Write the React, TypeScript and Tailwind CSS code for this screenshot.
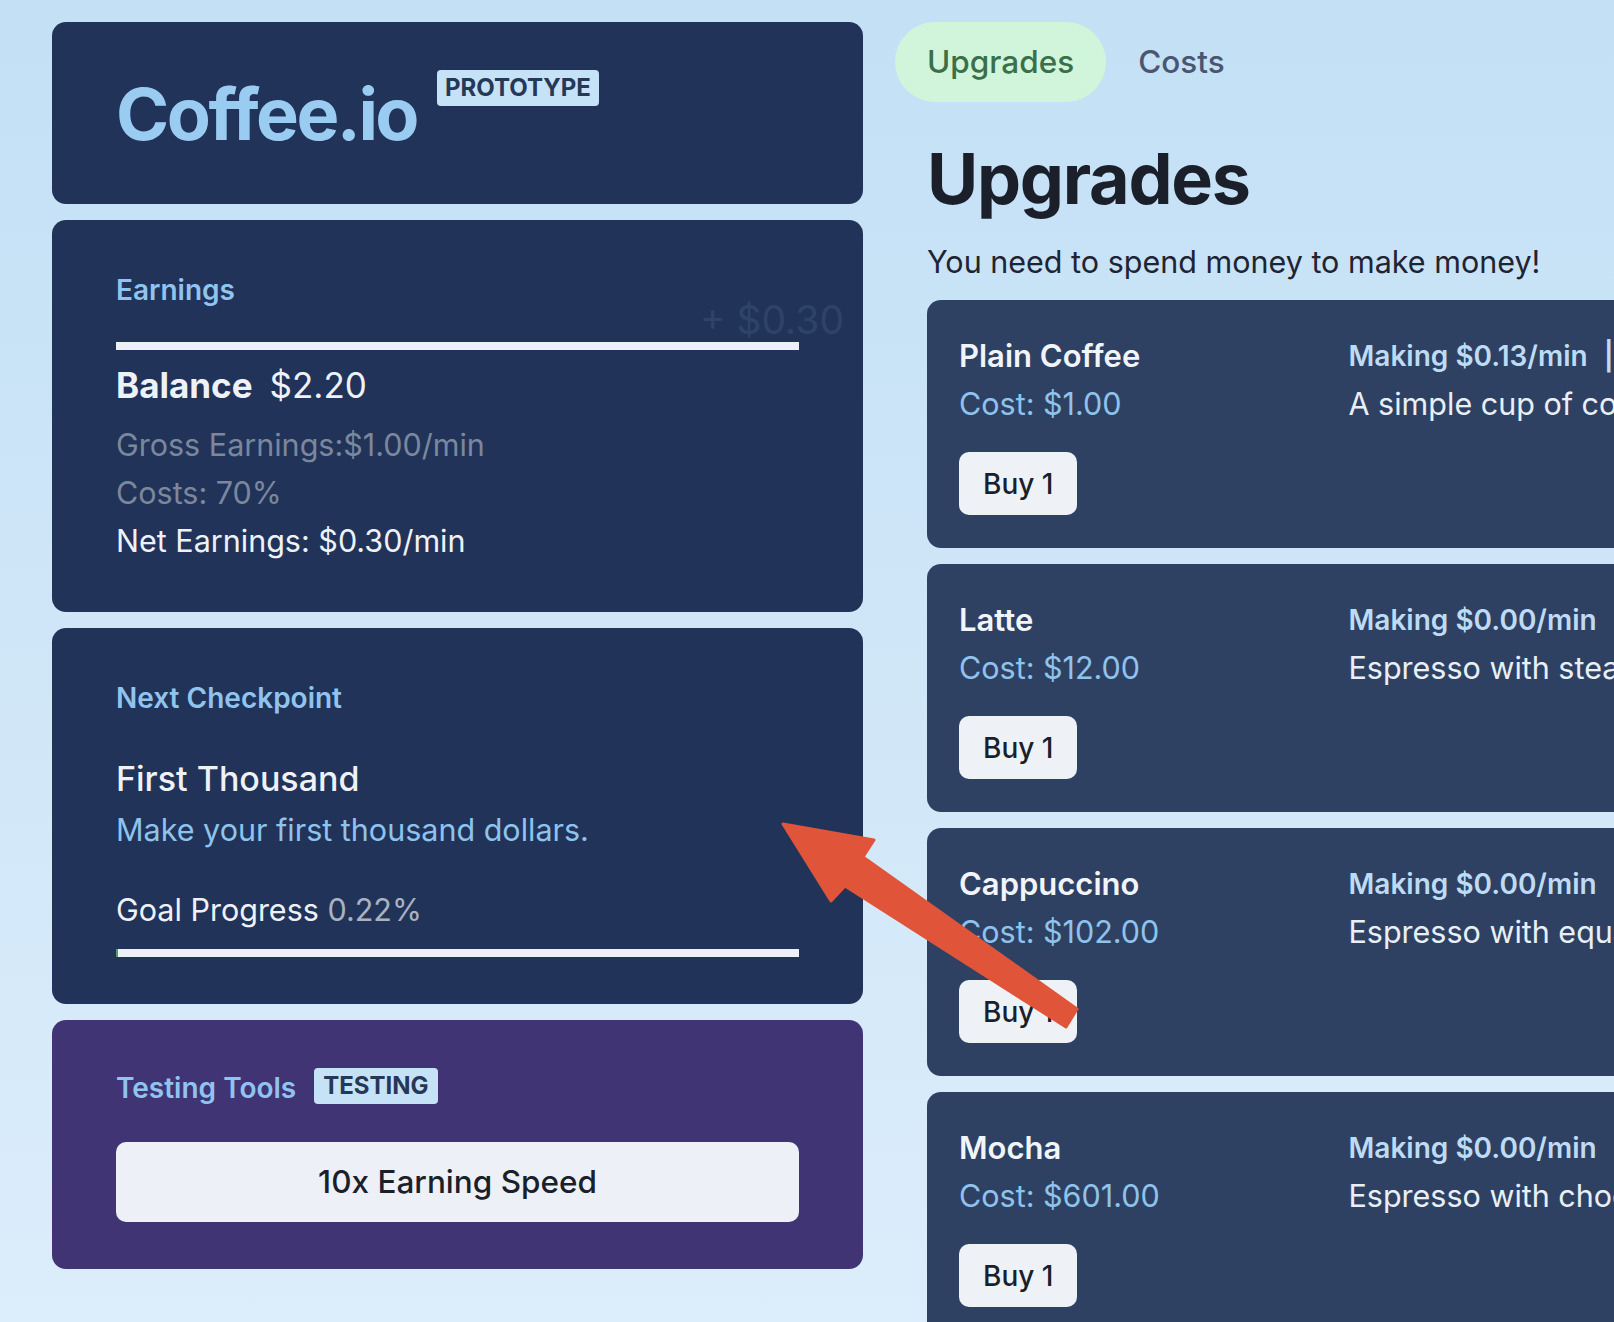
import React from "react";

const upgrades = [
  {
    name: "Plain Coffee",
    cost: "$1.00",
    making: "$0.13/min",
    extra: "1 owned",
    desc: "A simple cup of coffee.",
  },
  {
    name: "Latte",
    cost: "$12.00",
    making: "$0.00/min",
    extra: "",
    desc: "Espresso with steamed milk.",
  },
  {
    name: "Cappuccino",
    cost: "$102.00",
    making: "$0.00/min",
    extra: "",
    desc: "Espresso with equal parts steamed milk and foam.",
  },
  {
    name: "Mocha",
    cost: "$601.00",
    making: "$0.00/min",
    extra: "",
    desc: "Espresso with chocolate and steamed milk.",
  },
];

function UpgradeCard({ u }: { u: (typeof upgrades)[number] }) {
  return (
    <div className="grid h-[248px] shrink-0 grid-cols-2 gap-x-8 rounded-[14px] bg-[#2f4163] px-8 pt-8">
      <div className="flex flex-col items-start">
        <div className="text-[31px] font-semibold leading-[48px] text-[#f1f5f9]">{u.name}</div>
        <div className="text-[30.5px] leading-[48px] text-[#8ec3ec]">Cost: {u.cost}</div>
        <button className="mt-6 h-[63px] rounded-[10px] bg-[#eef2f7] px-6 text-[28px] font-medium text-[#1b1f2a]">
          Buy 1
        </button>
      </div>
      <div className="flex flex-col">
        <div className="whitespace-nowrap text-[28px] font-semibold leading-[48px] text-[#bddcf4]">
          Making {u.making}
          {u.extra ? (
            <>
              <span className="ml-[16px]">|</span>
              <span className="ml-[16px]">{u.extra}</span>
            </>
          ) : null}
        </div>
        <div className="whitespace-nowrap text-[30.5px] leading-[48px] text-[#e9eff6]">{u.desc}</div>
      </div>
    </div>
  );
}

export default function App() {
  return (
    <div className="relative h-screen w-screen overflow-hidden bg-linear-to-b from-[#c3e0f5] to-[#dcedfb] font-['Inter',sans-serif]">
      <div className="flex w-[1800px] gap-16 pl-[52px] pt-[22px]">
        {/* Left column */}
        <div className="flex w-[811px] shrink-0 flex-col gap-4">
          {/* Header card */}
          <div className="rounded-[14px] bg-[#213359] px-16 pb-[54px] pt-[56px]">
            <div className="flex items-start">
              <div className="text-[72px] font-bold leading-none tracking-[-0.035em] text-[#9acbf1]">Coffee.io</div>
              <div className="ml-[20px] -mt-[8px] flex h-[36px] items-center rounded-[4px] bg-[#c6e2f7] px-[8px] text-[24px] font-bold leading-none text-[#263757]">
                PROTOTYPE
              </div>
            </div>
          </div>

          {/* Earnings card */}
          <div className="relative rounded-[14px] bg-[#213359] px-16 pb-[47px] pt-[54px]">
            <div className="text-[28px] font-semibold leading-[32px] text-[#90c4ee]">Earnings</div>
            <div className="absolute right-[19px] top-[80px] text-[39px] leading-none text-[#2e4466]">+ $0.30</div>
            <div className="mt-9 h-2 bg-[#edf1f7]" />
            <div className="mt-[13px] flex items-baseline text-[35px] leading-[44px] text-[#eef2f7]">
              <span className="font-bold">Balance</span>
              <span className="ml-[17px]">$2.20</span>
            </div>
            <div className="mt-[14px] text-[30.5px] leading-[48px] text-[#7b879c]">Gross Earnings:$1.00/min</div>
            <div className="text-[30.5px] leading-[48px] text-[#7b879c]">Costs: 70%</div>
            <div className="text-[30.5px] leading-[48px] text-[#eef2f7]">Net Earnings: $0.30/min</div>
          </div>

          {/* Next checkpoint */}
          <div className="rounded-[14px] bg-[#213359] px-16 pb-[47px] pt-[54px]">
            <div className="text-[28px] font-semibold leading-[32px] text-[#90c4ee]">Next Checkpoint</div>
            <div className="mt-[43px] text-[34px] font-medium leading-[44px] text-[#eef2f7]">First Thousand</div>
            <div className="mt-[5px] text-[30.5px] leading-[48px] text-[#8ec3ec]">Make your first thousand dollars.</div>
            <div className="mt-8 text-[30.5px] leading-[48px] text-[#eef2f7]">
              Goal Progress <span className="text-[#a9b2c0]">0.22%</span>
            </div>
            <div className="mt-[15px] flex h-2 bg-[#edf1f7]">
              <div className="h-full w-[2px] bg-[#4f9e6a]" />
            </div>
          </div>

          {/* Testing tools */}
          <div className="rounded-[14px] bg-[#413474] px-16 pb-[47px] pt-12">
            <div className="flex items-end">
              <div className="text-[28px] font-semibold leading-[32px] text-[#90c4ee]">Testing Tools</div>
              <div className="ml-[18px] flex h-[36px] items-center rounded-[4px] bg-[#c6e2f7] px-[9px] text-[24px] font-bold leading-none text-[#263757]">
                TESTING
              </div>
            </div>
            <button className="mt-[38px] flex h-[80px] w-full items-center justify-center rounded-[10px] bg-[#edf1f7] text-[31.5px] font-medium text-[#1b1f2a]">
              10x Earning Speed
            </button>
          </div>
        </div>

        {/* Right column */}
        <div className="flex w-[811px] shrink-0 flex-col">
          <div className="-ml-8 flex">
            <button className="flex h-[80px] items-center rounded-full bg-[#d1f5da] px-8 text-[31.5px] font-medium text-[#3b6f4a]">
              Upgrades
            </button>
            <button className="flex h-[80px] items-center rounded-full px-8 text-[31.5px] font-medium text-[#4a5670]">
              Costs
            </button>
          </div>
          <h1 className="mt-[42px] text-[70px] font-bold leading-none tracking-[-0.018em] text-[#1b1f2a]">Upgrades</h1>
          <p className="mt-[30px] text-[30.5px] leading-[36px] text-[#1f2433]">You need to spend money to make money!</p>
          <div className="mt-5 flex flex-col gap-4">
            {upgrades.map((u) => (
              <UpgradeCard key={u.name} u={u} />
            ))}
          </div>
        </div>
      </div>

      {/* Annotation arrow */}
      <svg
        className="pointer-events-none absolute left-0 top-0"
        width="1614"
        height="1322"
        viewBox="0 0 1614 1322"
      >
        <polygon
          points="783,824 874,840 863,857 1077,1009 1066,1027 845,886 831,901"
          fill="#e0553a"
          stroke="#e0553a"
          strokeWidth="3"
          strokeLinejoin="round"
        />
      </svg>
    </div>
  );
}
